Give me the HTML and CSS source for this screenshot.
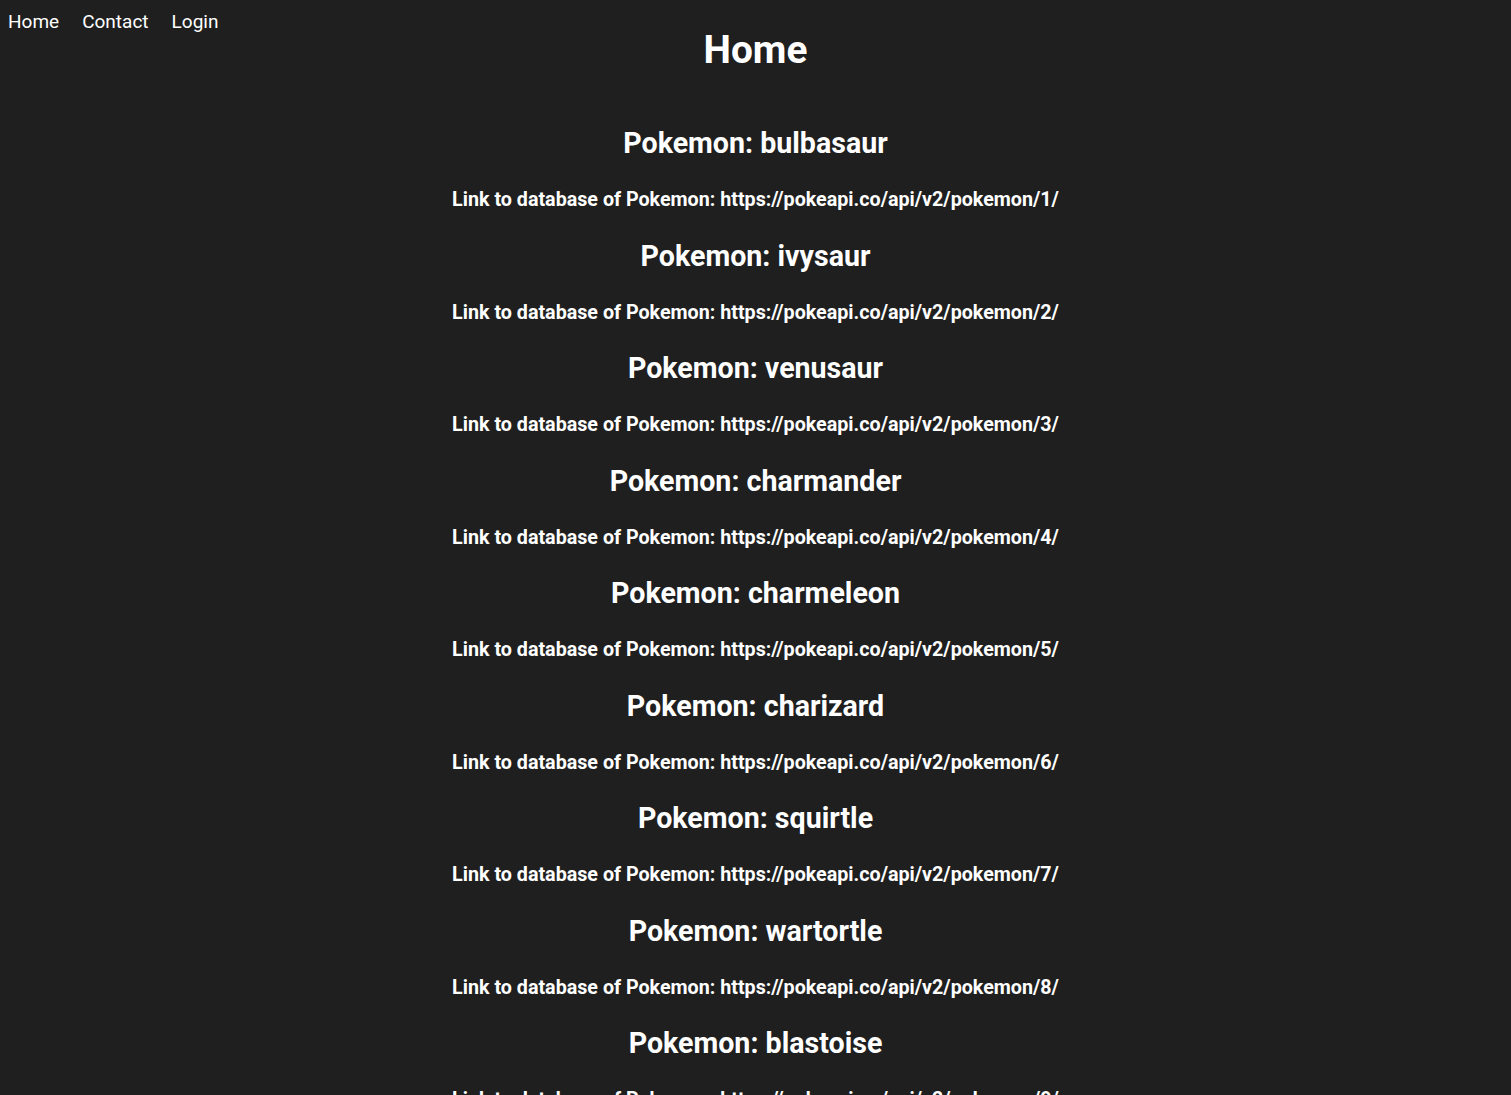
FILE: index.html
```html
<!DOCTYPE html>
<html lang="en">
<head>
<meta charset="utf-8">
<title>Home</title>
<link rel="stylesheet" href="styles.css">
</head>
<body>
<header class="header">
  <nav class="nav">
    <a class="nav-link" href="#">Home</a>
    <a class="nav-link" href="#">Contact</a>
    <a class="nav-link" href="#">Login</a>
  </nav>
  <h1 class="title">Home</h1>
</header>
<main class="list">
  <h2 class="poke-name">Pokemon: bulbasaur</h2>
  <h4 class="poke-link">Link to database of Pokemon: https://pokeapi.co/api/v2/pokemon/1/</h4>
  <h2 class="poke-name">Pokemon: ivysaur</h2>
  <h4 class="poke-link">Link to database of Pokemon: https://pokeapi.co/api/v2/pokemon/2/</h4>
  <h2 class="poke-name">Pokemon: venusaur</h2>
  <h4 class="poke-link">Link to database of Pokemon: https://pokeapi.co/api/v2/pokemon/3/</h4>
  <h2 class="poke-name">Pokemon: charmander</h2>
  <h4 class="poke-link">Link to database of Pokemon: https://pokeapi.co/api/v2/pokemon/4/</h4>
  <h2 class="poke-name">Pokemon: charmeleon</h2>
  <h4 class="poke-link">Link to database of Pokemon: https://pokeapi.co/api/v2/pokemon/5/</h4>
  <h2 class="poke-name">Pokemon: charizard</h2>
  <h4 class="poke-link">Link to database of Pokemon: https://pokeapi.co/api/v2/pokemon/6/</h4>
  <h2 class="poke-name">Pokemon: squirtle</h2>
  <h4 class="poke-link">Link to database of Pokemon: https://pokeapi.co/api/v2/pokemon/7/</h4>
  <h2 class="poke-name">Pokemon: wartortle</h2>
  <h4 class="poke-link">Link to database of Pokemon: https://pokeapi.co/api/v2/pokemon/8/</h4>
  <h2 class="poke-name">Pokemon: blastoise</h2>
  <h4 class="poke-link">Link to database of Pokemon: https://pokeapi.co/api/v2/pokemon/9/</h4>
</main>
</body>
</html>
```
FILE: styles.css
```css
html, body {
  margin: 0;
  padding: 0;
  background: #1f1f1f;
  color: #ffffff;
  font-family: Roboto, "Noto Sans", Arial, sans-serif;
}

.header {
  display: grid;
  grid-template-columns: 1fr auto 1fr;
  align-items: start;
}

.nav {
  display: flex;
  gap: 23px;
  padding: 11px 8px 0;
}

.nav-link {
  color: #ffffff;
  text-decoration: none;
  font-size: 19px;
  line-height: 22px;
}

.title {
  margin: 28px 0 0;
  font-size: 38.8px;
  line-height: 44px;
  font-weight: 700;
  text-align: center;
}

.list {
  display: flex;
  flex-direction: column;
  align-items: center;
  gap: 28.25px;
  padding-top: 55px;
  text-align: center;
}

.poke-name {
  margin: 0;
  font-size: 28.6px;
  line-height: 33px;
  font-weight: 700;
}

.poke-link {
  margin: 0;
  font-size: 19.7px;
  line-height: 23px;
  font-weight: 700;
}
```
